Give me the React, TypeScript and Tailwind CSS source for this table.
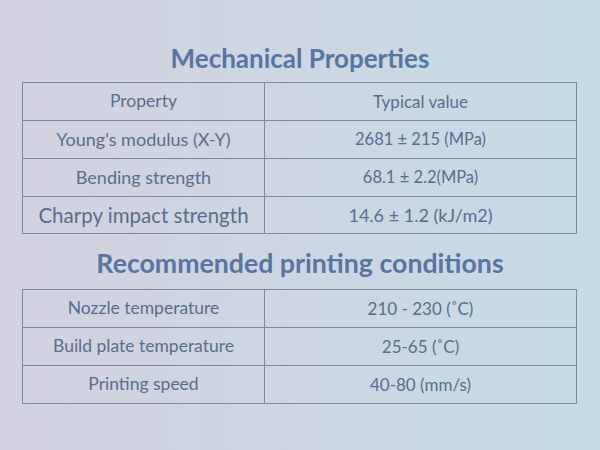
const mech = [
  { k: "Young's modulus (X-Y)", v: "2681 ± 215 (MPa)" },
  { k: "Bending strength", v: "68.1 ± 2.2(MPa)" },
];

const cond = [
  { k: "Nozzle temperature", v: "210 - 230 (˚C)" },
  { k: "Build plate temperature", v: "25-65 (˚C)" },
  { k: "Printing speed", v: "40-80 (mm/s)" },
];

const cell = "border border-[#7d889a] text-center align-middle";

export default function App() {
  return (
    <div
      className="w-[600px] h-[450px] bg-gradient-to-r from-[#d3d1df] to-[#c4dce6] text-[#586d8e] pt-[40px]"
      style={{ fontFamily: "Lato, 'Open Sans', sans-serif" }}>
      <h2 className="text-center text-[26px] leading-[36px] font-bold text-[#5874a0]">
        Mechanical Properties
      </h2>
      <table className="ml-[22px] mt-[6px] w-[555px] border-collapse">
        <tbody>
          <tr className="h-[38px]">
            <td className={`${cell} w-[242px] text-[17.5px]`}>Property</td>
            <td className={`${cell} text-[17px]`}>Typical value</td>
          </tr>
          {mech.map((r, i) => (
            <tr key={i} className="h-[38px]">
              <td className={`${cell} text-[18px]`}>{r.k}</td>
              <td className={`${cell} text-[16.5px]`}>{r.v}</td>
            </tr>
          ))}
          <tr className="h-[37px]">
            <td className={`${cell} text-[20.5px]`}>Charpy impact strength</td>
            <td className={`${cell} text-[18px]`}>14.6 ± 1.2 (kJ/m2)</td>
          </tr>
        </tbody>
      </table>
      <h2 className="text-center text-[26.7px] leading-[36px] font-bold text-[#5874a0] mt-[11px]">
        Recommended printing conditions
      </h2>
      <table className="ml-[22px] mt-[8px] w-[555px] border-collapse">
        <tbody>
          {cond.map((r, i) => (
            <tr key={i} className="h-[38px]">
              <td className={`${cell} w-[242px] text-[17.5px]`}>{r.k}</td>
              <td className={`${cell} text-[17px]`}>{r.v}</td>
            </tr>
          ))}
        </tbody>
      </table>
    </div>
  );
}
